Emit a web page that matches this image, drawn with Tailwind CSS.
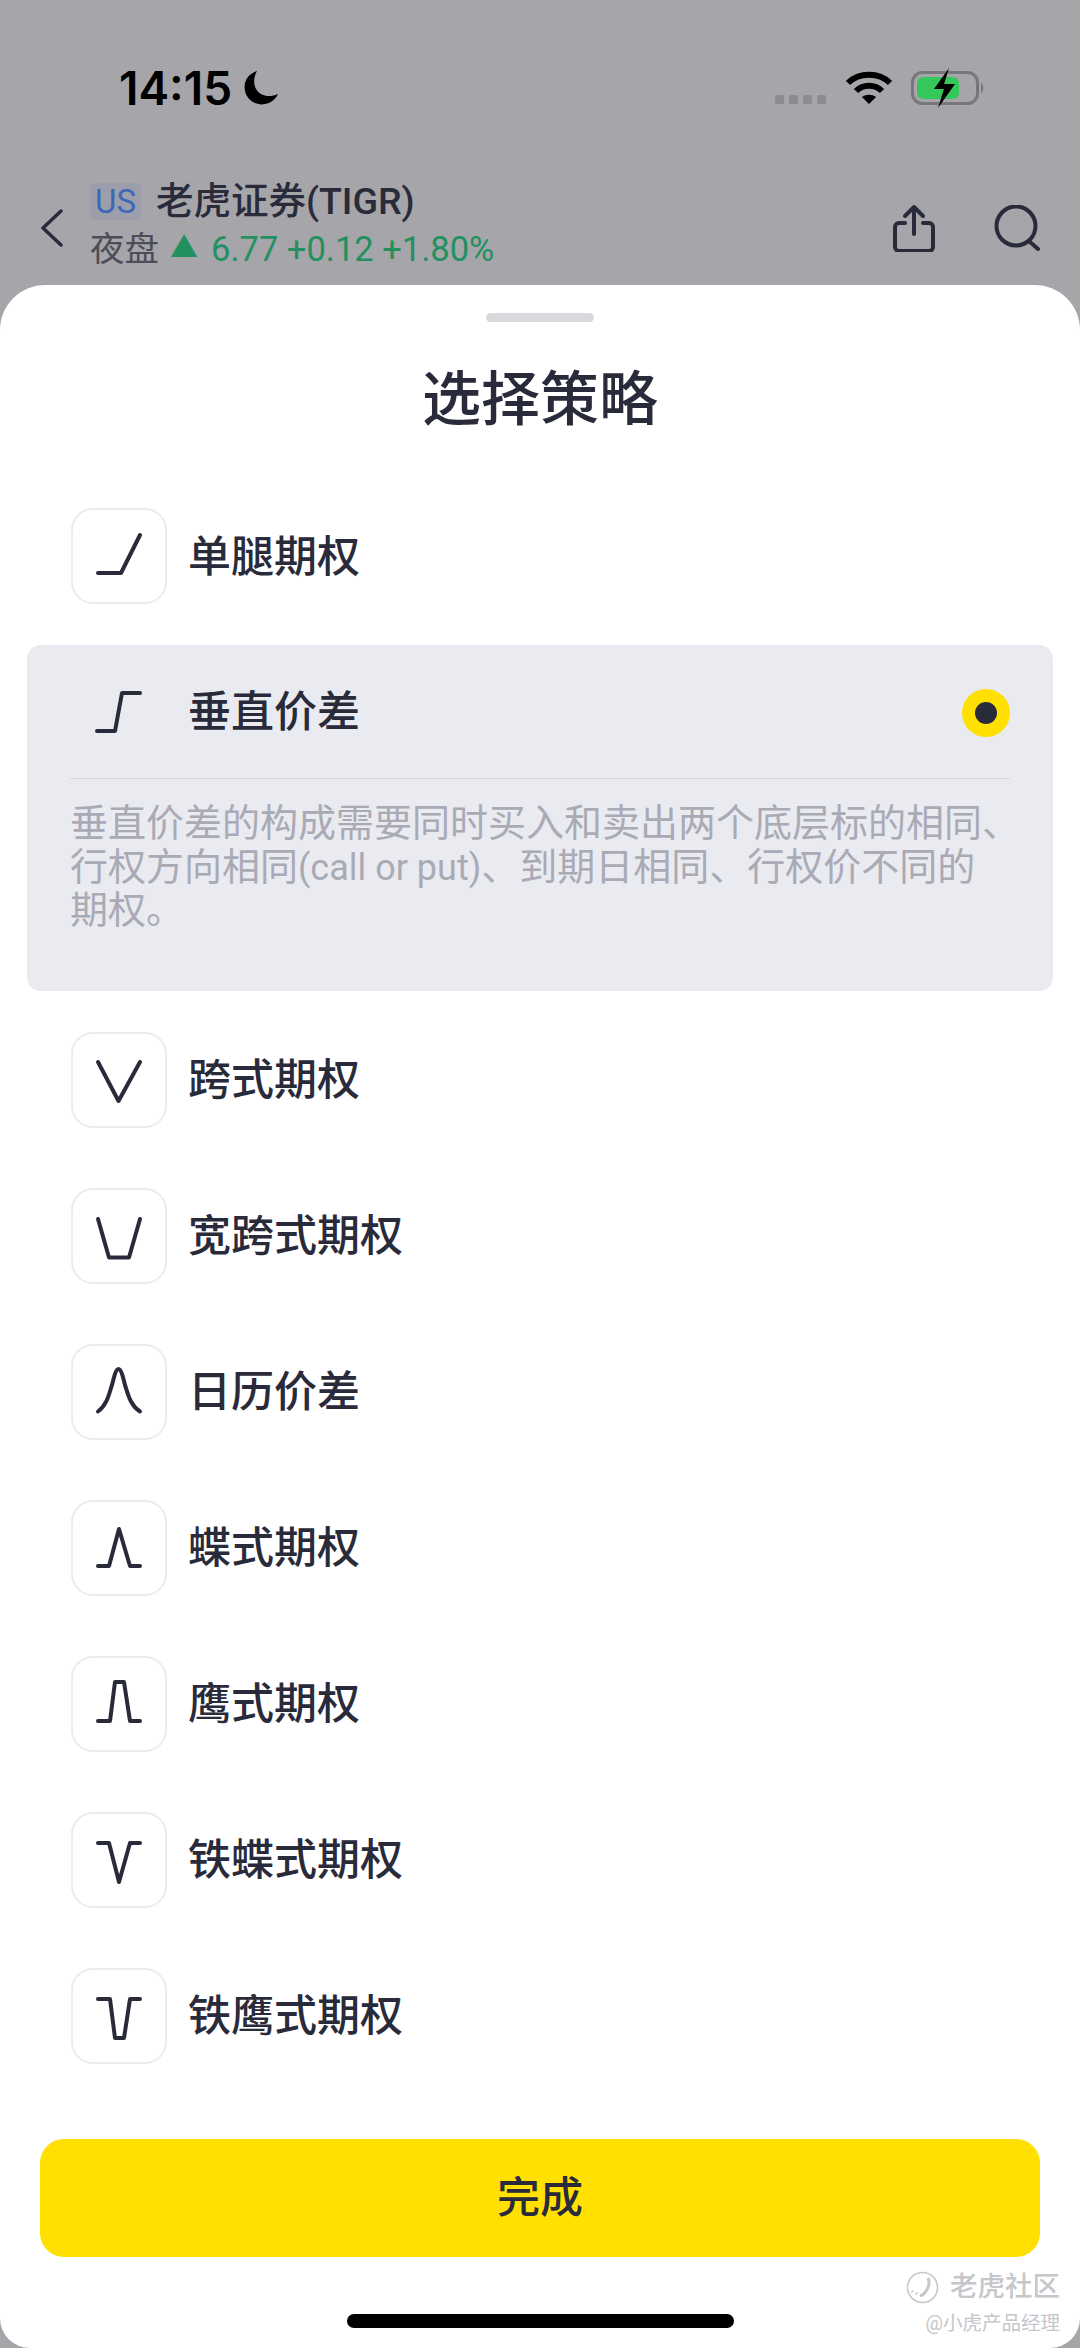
<!DOCTYPE html>
<html lang="zh-CN">

<head>
    <meta charset="UTF-8" />
    <meta name="viewport" content="width=device-width, initial-scale=1.0" />
    <title>选择策略</title>
    <script src="https://cdn.jsdelivr.net/npm/@tailwindcss/browser@4"></script>
</head>

<body class="bg-[#a5a5aa] font-['Roboto','Noto_Sans_CJK_SC',sans-serif]">
    <div class="relative w-[1080px] h-[2348px] overflow-hidden flex flex-col text-[#2a2b3a]">

        <!-- Dimmed page behind the sheet -->
        <header class="h-[285px] shrink-0 flex flex-col">
            <div class="mt-[70px] h-[36px] pl-[119px] pr-[94px] flex items-center">
                <span class="font-['Inter'] font-semibold text-[46px] leading-none text-black">14:15</span>
                <svg class="ml-[11px]" width="36" height="36" viewBox="0 0 36 36"><path d="M14 1C5 4 0 12 2 21c2 9 11 15 20 13 6-1 11-5 13-10-9 4-18 2-22-5-3-6-2-13 1-18z" fill="#000"/></svg>
                <div class="ml-auto flex items-center gap-[5px] mt-[22px]">
                    <span class="w-[9px] h-[9px] rounded-[2px] bg-[#8b8b90]"></span>
                    <span class="w-[9px] h-[9px] rounded-[2px] bg-[#8b8b90]"></span>
                    <span class="w-[9px] h-[9px] rounded-[2px] bg-[#8b8b90]"></span>
                    <span class="w-[9px] h-[9px] rounded-[2px] bg-[#8b8b90]"></span>
                </div>
                <svg class="ml-[20px]" width="46" height="34" viewBox="0 0 46 34" fill="none" stroke="#000" stroke-width="6"><path d="M2 12C13 1 33 1 44 12"/><path d="M10 20c7-7 19-7 26 0"/><path d="M16 26l7 7 7-7c-4-3-10-3-14 0z" fill="#000" stroke="none"/></svg>
                <svg class="ml-[19px]" width="75" height="40" viewBox="0 0 75 40" fill="none">
                    <rect x="1.5" y="4.5" width="65" height="31" rx="10" stroke="#77777b" stroke-width="3"/>
                    <rect x="6" y="9" width="42" height="22" rx="6" fill="#34c759"/>
                    <path d="M70 15c3 1 3 9 0 10z" fill="#77777b"/>
                    <path d="M38 0L23 21h10l-6 19 17-24H33z" fill="#000"/>
                </svg>
            </div>
            <div class="mt-[79px] h-[85px] pl-[40px] pr-[40px] flex items-center">
                <svg width="24" height="38" viewBox="0 0 24 38" fill="none" stroke="#2a2b3a" stroke-width="3.5" stroke-linecap="round" stroke-linejoin="round"><path d="M21 2L3 19l18 17"/></svg>
                <div class="ml-[26px] flex flex-col">
                    <div class="flex items-center h-[37px]">
                        <span class="w-[51px] h-[37px] rounded-[4px] bg-[#9c9fab] text-[#3f67b8] text-[33px] leading-[37px] text-center">US</span>
                        <span class="ml-[15px] text-[37.5px] leading-[37px] font-medium">老虎证券(TIGR)</span>
                    </div>
                    <div class="mt-[5px] flex items-center h-[48px] text-[34.5px] leading-[48px]">
                        <span class="text-[#4d4d58]">夜盘</span>
                        <span class="ml-[11px] text-[28px] text-[#23905f]">▲</span>
                        <span class="ml-[13px] text-[#23905f]">6.77 +0.12 +1.80%</span>
                    </div>
                </div>
                <svg class="ml-auto" width="44" height="48" viewBox="0 0 44 48" fill="none" stroke="#2a2b3a" stroke-width="4" stroke-linecap="round" stroke-linejoin="round"><path d="M22 30V4M13 12l9-9 9 9"/><path d="M13 19H7a4 4 0 0 0-4 4v20a4 4 0 0 0 4 4h30a4 4 0 0 0 4-4V23a4 4 0 0 0-4-4h-6"/></svg>
                <svg class="ml-[58px]" width="46" height="46" viewBox="0 0 46 46" fill="none" stroke="#2a2b3a" stroke-width="4" stroke-linecap="round"><circle cx="22" cy="21" r="19.5"/><path d="M36 37l8 7"/></svg>
            </div>
        </header>

        <!-- Bottom sheet -->
        <main class="flex-1 bg-white rounded-t-[45px] rounded-b-[30px] flex flex-col items-stretch pt-[28px]">
            <div class="self-center w-[108px] h-[9px] rounded-full bg-[#d9d9de]"></div>
            <h1 class="mt-[39px] text-center text-[59px] leading-[78px] font-medium">选择策略</h1>

            <div class="mt-[69px] flex flex-col">
                <div class="px-[71px] flex items-center h-[96px]">
                    <div class="w-[96px] h-[96px] rounded-[22px] border-2 border-[#ececf0]">
                        <svg width="92" height="92" viewBox="2 2 92 92" fill="none" stroke="#2a2b3a" stroke-width="4" stroke-linecap="round" stroke-linejoin="round"><path d="M27 65H50L69 27"/></svg>
                    </div>
                    <span class="ml-[21px] pt-[2px] text-[43px] font-medium">单腿期权</span>
                </div>

                <!-- Selected strategy -->
                <div class="mt-[41px] mx-[27px] bg-[#e9ebf0] rounded-[14px] pl-[43px] pr-[43px] pt-[20px] pb-[58px]">
                    <div class="flex items-center h-[95px]">
                        <div class="w-[96px] h-[95px]">
                            <svg width="96" height="95" viewBox="0 0 96 95" fill="none" stroke="#2a2b3a" stroke-width="4" stroke-linecap="round" stroke-linejoin="round"><path d="M27 66H45L52 28H70"/></svg>
                        </div>
                        <span class="ml-[22px] text-[43px] font-medium">垂直价差</span>
                        <span class="ml-auto w-[48px] h-[48px] rounded-full bg-[#ffe000] flex items-center justify-center">
                            <span class="w-[22px] h-[22px] rounded-full bg-[#2a2b3a]"></span>
                        </span>
                    </div>
                    <div class="mt-[18px] h-px bg-[#d6d7dd]"></div>
                    <p class="mt-[23px] -mr-[14px] text-[38px] leading-[43.5px] text-[#a9aab5]">垂直价差的构成需要同时买入和卖出两个底层标的相同、<br>行权方向相同<span class="text-[36px] leading-none">(call or put)</span>、到期日相同、行权价不同的<br>期权。</p>
                </div>

                <div class="mt-[41px] px-[71px] flex flex-col gap-[60px]">
                    <div class="flex items-center h-[96px]">
                        <div class="w-[96px] h-[96px] rounded-[22px] border-2 border-[#ececf0]">
                            <svg width="92" height="92" viewBox="2 2 92 92" fill="none" stroke="#2a2b3a" stroke-width="4" stroke-linecap="round" stroke-linejoin="round"><path d="M27 30L47.5 69 69 30"/></svg>
                        </div>
                        <span class="ml-[21px] pt-[2px] text-[43px] font-medium">跨式期权</span>
                    </div>
                    <div class="flex items-center h-[96px]">
                        <div class="w-[96px] h-[96px] rounded-[22px] border-2 border-[#ececf0]">
                            <svg width="92" height="92" viewBox="2 2 92 92" fill="none" stroke="#2a2b3a" stroke-width="4" stroke-linecap="round" stroke-linejoin="round"><path d="M27 31L38 69.5H58L69 31"/></svg>
                        </div>
                        <span class="ml-[21px] pt-[2px] text-[43px] font-medium">宽跨式期权</span>
                    </div>
                    <div class="flex items-center h-[96px]">
                        <div class="w-[96px] h-[96px] rounded-[22px] border-2 border-[#ececf0]">
                            <svg width="92" height="92" viewBox="2 2 92 92" fill="none" stroke="#2a2b3a" stroke-width="4" stroke-linecap="round" stroke-linejoin="round"><path d="M27 67.5C36 61 38 50 41 41 43 33 45 25 47.5 25 50 25 52 33 54 41 57 50 59 61 69 67.5"/></svg>
                        </div>
                        <span class="ml-[21px] pt-[2px] text-[43px] font-medium">日历价差</span>
                    </div>
                    <div class="flex items-center h-[96px]">
                        <div class="w-[96px] h-[96px] rounded-[22px] border-2 border-[#ececf0]">
                            <svg width="92" height="92" viewBox="2 2 92 92" fill="none" stroke="#2a2b3a" stroke-width="4" stroke-linecap="round" stroke-linejoin="round"><path d="M27 66H38L48 29 59 66H69"/></svg>
                        </div>
                        <span class="ml-[21px] pt-[2px] text-[43px] font-medium">蝶式期权</span>
                    </div>
                    <div class="flex items-center h-[96px]">
                        <div class="w-[96px] h-[96px] rounded-[22px] border-2 border-[#ececf0]">
                            <svg width="92" height="92" viewBox="2 2 92 92" fill="none" stroke="#2a2b3a" stroke-width="4" stroke-linecap="round" stroke-linejoin="round"><path d="M27 65H39L44 26H53L59 65H69"/></svg>
                        </div>
                        <span class="ml-[21px] pt-[2px] text-[43px] font-medium">鹰式期权</span>
                    </div>
                    <div class="flex items-center h-[96px]">
                        <div class="w-[96px] h-[96px] rounded-[22px] border-2 border-[#ececf0]">
                            <svg width="92" height="92" viewBox="2 2 92 92" fill="none" stroke="#2a2b3a" stroke-width="4" stroke-linecap="round" stroke-linejoin="round"><path d="M27 31H38L48 70 59 31H69"/></svg>
                        </div>
                        <span class="ml-[21px] pt-[2px] text-[43px] font-medium">铁蝶式期权</span>
                    </div>
                    <div class="flex items-center h-[96px]">
                        <div class="w-[96px] h-[96px] rounded-[22px] border-2 border-[#ececf0]">
                            <svg width="92" height="92" viewBox="2 2 92 92" fill="none" stroke="#2a2b3a" stroke-width="4" stroke-linecap="round" stroke-linejoin="round"><path d="M27 31H39L44 70H53L59 31H69"/></svg>
                        </div>
                        <span class="ml-[21px] pt-[2px] text-[43px] font-medium">铁鹰式期权</span>
                    </div>
                </div>
            </div>

            <button class="mt-[75px] mx-[40px] h-[118px] pt-[2px] rounded-[24px] bg-[#ffe000] text-[43px] font-medium text-[#2a2b3a]">完成</button>
            <div class="mt-[57px] self-center w-[387px] h-[14px] rounded-full bg-black"></div>
        </main>

        <!-- Watermark over the screenshot -->
        <div class="absolute right-[20px] top-[2268px] flex flex-col items-end text-[#c6c6cb]">
            <div class="flex items-center h-[38px]">
                <svg width="33" height="33" viewBox="0 0 33 33" fill="none" stroke="#c6c6cb" stroke-width="1.5"><circle cx="16.5" cy="16.5" r="15"/><path d="M22 7c3 6-1 15-8 18M6 20l1 1M10 22l1 1" stroke-width="3"/></svg>
                <span class="ml-[11px] text-[27.5px] leading-[38px] font-medium">老虎社区</span>
            </div>
            <span class="mt-[5px] text-[19.5px] leading-[26px]">@小虎产品经理</span>
        </div>
    </div>
</body>

</html>
